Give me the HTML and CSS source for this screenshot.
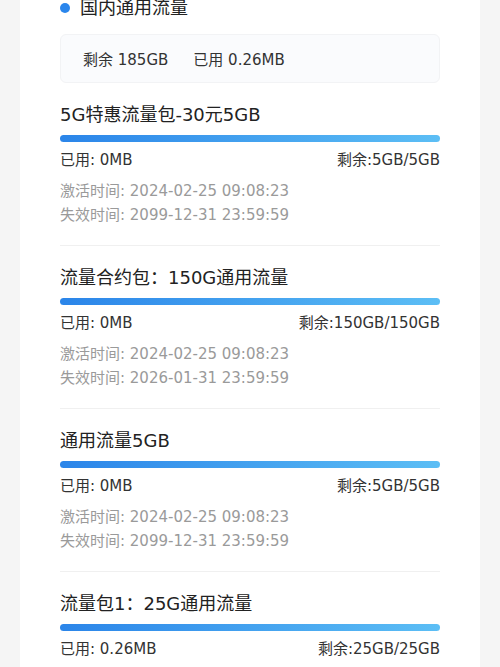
FILE: index.html
```html
<!DOCTYPE html>
<html lang="zh-CN">
<head>
  <meta charset="UTF-8" />
  <title>流量详情</title>
  <meta name="viewport" content="width=device-width, initial-scale=1.0" />
  <link rel="stylesheet" href="styles.css">
</head>
<body>
  <div class="card">
    <div class="group-title"><span class="dot"></span>国内通用流量</div>

    <div class="summary">
      <span>剩余 185GB</span>
      <span>已用 0.26MB</span>
    </div>

    <div class="pack">
      <div class="pack-name">5G特惠流量包-30元5GB</div>
      <div class="bar"></div>
      <div class="usage"><span>已用: 0MB</span><span>剩余:5GB/5GB</span></div>
      <div class="time">激活时间: 2024-02-25 09:08:23</div>
      <div class="time">失效时间: 2099-12-31 23:59:59</div>
    </div>

    <div class="pack">
      <div class="pack-name">流量合约包：150G通用流量</div>
      <div class="bar"></div>
      <div class="usage"><span>已用: 0MB</span><span>剩余:150GB/150GB</span></div>
      <div class="time">激活时间: 2024-02-25 09:08:23</div>
      <div class="time">失效时间: 2026-01-31 23:59:59</div>
    </div>

    <div class="pack">
      <div class="pack-name">通用流量5GB</div>
      <div class="bar"></div>
      <div class="usage"><span>已用: 0MB</span><span>剩余:5GB/5GB</span></div>
      <div class="time">激活时间: 2024-02-25 09:08:23</div>
      <div class="time">失效时间: 2099-12-31 23:59:59</div>
    </div>

    <div class="pack">
      <div class="pack-name">流量包1：25G通用流量</div>
      <div class="bar"></div>
      <div class="usage"><span>已用: 0.26MB</span><span>剩余:25GB/25GB</span></div>
      <div class="time">激活时间: 2024-02-25 09:08:23</div>
      <div class="time">失效时间: 2099-12-31 23:59:59</div>
    </div>
  </div>
</body>
</html>
```

FILE: styles.css
```css
body {
  margin: 0;
  background: #f5f5f5;
  font-family: "DejaVu Sans", "Noto Sans CJK SC", sans-serif;
  color: #222;
  overflow: hidden;
}
.card {
  background: #fff;
  margin: -8px 20px 0;
  padding: 0 40px 40px;
}
.group-title {
  display: flex;
  align-items: center;
  font-size: 18px;
  line-height: 32px;
  color: #222;
}
.dot {
  width: 10px;
  height: 10px;
  border-radius: 50%;
  background: #2a86ec;
  margin: 0 10px 0 0;
}
.summary {
  margin-top: 10px;
  height: 47px;
  display: flex;
  align-items: center;
  gap: 25px;
  padding: 0 22px;
  background: #fafbfd;
  border: 1px solid #f2f3f5;
  border-radius: 6px;
  font-size: 15px;
  color: #333;
}
.pack {
  padding: 20px 0 18px;
  border-bottom: 1px solid #f0f0f0;
}
.pack-name {
  font-size: 18px;
  line-height: 24px;
  color: #222;
}
.bar {
  height: 7px;
  border-radius: 4px;
  margin-top: 8px;
  background: linear-gradient(to right, #2b85e9, #5cbef5);
}
.usage {
  display: flex;
  justify-content: space-between;
  font-size: 15px;
  line-height: 22px;
  margin-top: 7px;
  color: #333;
}
.time {
  font-size: 15px;
  line-height: 24px;
  color: #9a9a9a;
}
.usage + .time {
  margin-top: 8px;
}
```
